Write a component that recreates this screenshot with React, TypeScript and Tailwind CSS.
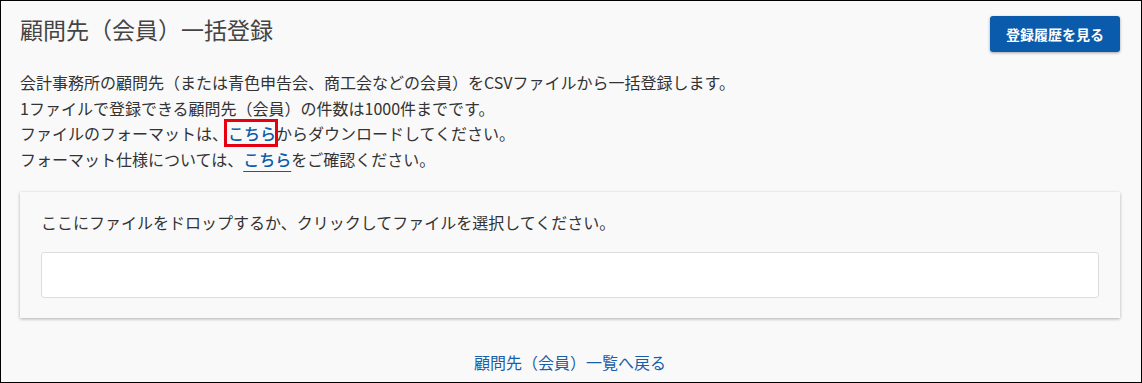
export default function App() {
  return (
    <main
      className="h-[383px] w-[1142px] overflow-hidden border border-black bg-[#f9f9f9] pl-[19px] pr-[21px] text-[#333]"
      style={{ fontFamily: '"Noto Sans CJK JP", "Noto Sans", sans-serif' }}
    >
      {/* HEADER */}
      <div className="flex items-start justify-between pt-[14px]">
        <h1 className="text-[23px] font-normal leading-[28px] text-[#444]">
          顧問先（会員）一括登録
        </h1>
        <button className="mt-px h-[36px] w-[130px] rounded-[3px] bg-[#0a5bab] text-[14px] font-bold text-white shadow-[0_1px_3px_rgba(0,0,0,0.35)]">
          登録履歴を見る
        </button>
      </div>

      {/* DESCRIPTION */}
      <div className="mt-[18px] text-[16px] leading-[25.6px]">
        <p>会計事務所の顧問先（または青色申告会、商工会などの会員）をCSVファイルから一括登録します。</p>
        <p>1ファイルで登録できる顧問先（会員）の件数は1000件までです。</p>
        <p>
          ファイルのフォーマットは、
          <span className="relative">
            <a href="#" className="font-medium text-[#0a5bab] underline decoration-1 underline-offset-[5px]">
              こちら
            </a>
            <span className="absolute -left-[4px] -right-[2px] -top-[2px] h-[28px] border-[3px] border-[#e60012]" />
          </span>
          からダウンロードしてください。
        </p>
        <p>
          フォーマット仕様については、
          <a href="#" className="font-medium text-[#0a5bab] underline decoration-1 underline-offset-[5px]">
            こちら
          </a>
          をご確認ください。
        </p>
      </div>

      {/* DROP ZONE */}
      <div className="mt-[20px] bg-[#f9f9f9] px-[21px] pb-[20px] pt-[18px] shadow-[0_1px_3px_rgba(0,0,0,0.3)]">
        <p className="text-[16px] leading-[25.6px]">
          ここにファイルをドロップするか、クリックしてファイルを選択してください。
        </p>
        <div className="mt-[16px] h-[46px] rounded-[3px] border border-[#ddd] bg-white" />
      </div>

      {/* BACK LINK */}
      <div className="mt-[32px] text-center text-[16px] leading-[25.6px]">
        <a href="#" className="text-[#1a5ea8]">
          顧問先（会員）一覧へ戻る
        </a>
      </div>
    </main>
  );
}
